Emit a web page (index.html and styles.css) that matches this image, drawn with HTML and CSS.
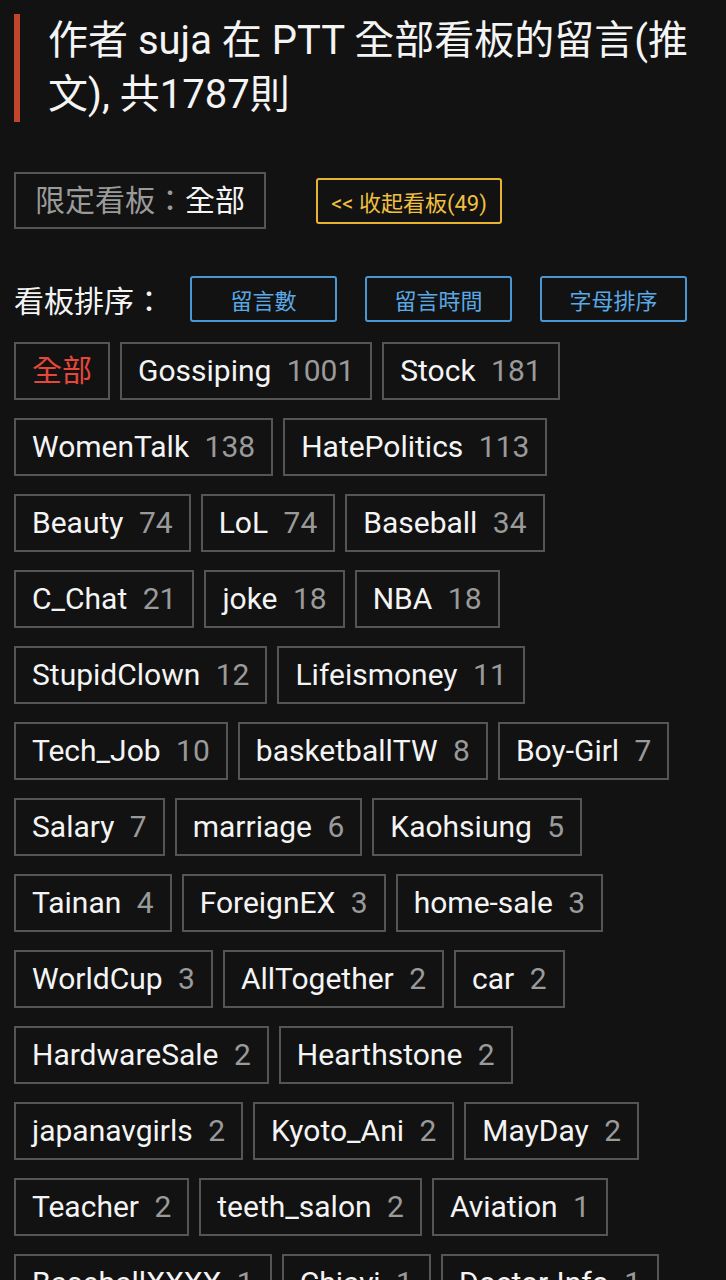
FILE: index.html
```html
<!DOCTYPE html>
<html lang="zh-Hant">
<head>
<meta charset="utf-8">
<link rel="stylesheet" href="styles.css">
</head>
<body>
<div class="page">
  <h1 class="title">作者 suja 在 PTT 全部看板的留言(推文), 共1787則</h1>

  <div class="filter-row">
    <div class="filter-box"><span class="muted">限定看板：</span>全部</div>
    <button class="btn btn-yellow">&lt;&lt; 收起看板(49)</button>
  </div>

  <div class="sort-row">
    <span class="sort-label">看板排序：</span>
    <button class="btn btn-blue">留言數</button>
    <button class="btn btn-blue">留言時間</button>
    <button class="btn btn-blue">字母排序</button>
  </div>

  <div class="tags">
    <span class="tag"><span class="all">全部</span></span>
    <span class="tag">Gossiping <span class="cnt">1001</span></span>
    <span class="tag">Stock <span class="cnt">181</span></span>
    <span class="tag">WomenTalk <span class="cnt">138</span></span>
    <span class="tag">HatePolitics <span class="cnt">113</span></span>
    <span class="tag">Beauty <span class="cnt">74</span></span>
    <span class="tag">LoL <span class="cnt">74</span></span>
    <span class="tag">Baseball <span class="cnt">34</span></span>
    <span class="tag">C_Chat <span class="cnt">21</span></span>
    <span class="tag">joke <span class="cnt">18</span></span>
    <span class="tag">NBA <span class="cnt">18</span></span>
    <span class="tag">StupidClown <span class="cnt">12</span></span>
    <span class="tag">Lifeismoney <span class="cnt">11</span></span>
    <span class="tag">Tech_Job <span class="cnt">10</span></span>
    <span class="tag">basketballTW <span class="cnt">8</span></span>
    <span class="tag">Boy-Girl <span class="cnt">7</span></span>
    <span class="tag">Salary <span class="cnt">7</span></span>
    <span class="tag">marriage <span class="cnt">6</span></span>
    <span class="tag">Kaohsiung <span class="cnt">5</span></span>
    <span class="tag">Tainan <span class="cnt">4</span></span>
    <span class="tag">ForeignEX <span class="cnt">3</span></span>
    <span class="tag">home-sale <span class="cnt">3</span></span>
    <span class="tag">WorldCup <span class="cnt">3</span></span>
    <span class="tag">AllTogether <span class="cnt">2</span></span>
    <span class="tag">car <span class="cnt">2</span></span>
    <span class="tag">HardwareSale <span class="cnt">2</span></span>
    <span class="tag">Hearthstone <span class="cnt">2</span></span>
    <span class="tag">japanavgirls <span class="cnt">2</span></span>
    <span class="tag">Kyoto_Ani <span class="cnt">2</span></span>
    <span class="tag">MayDay <span class="cnt">2</span></span>
    <span class="tag">Teacher <span class="cnt">2</span></span>
    <span class="tag">teeth_salon <span class="cnt">2</span></span>
    <span class="tag">Aviation <span class="cnt">1</span></span>
    <span class="tag">BaseballXXXX <span class="cnt">1</span></span>
    <span class="tag">Chiayi <span class="cnt">1</span></span>
    <span class="tag">Doctor-Info <span class="cnt">1</span></span>
  </div>
</div>
</body>
</html>
```
FILE: styles.css
```css
html, body {
  margin: 0;
  padding: 0;
  background: #121212;
}
body {
  font-family: Roboto, "Noto Sans CJK TC", sans-serif;
  color: #f2f2f2;
}
.page {
  padding: 14px 14px 0 14px;
}
.title {
  margin: 0;
  border-left: 6px solid #c0452a;
  padding-left: 28px;
  font-size: 40px;
  font-weight: 400;
  line-height: 54px;
  color: #f4f4f4;
}
.filter-row {
  display: flex;
  align-items: center;
  margin-top: 50px;
}
.filter-box {
  box-sizing: border-box;
  height: 57px;
  padding: 0 19px;
  border: 2px solid #555;
  font-size: 30px;
  line-height: 53px;
  color: #f4f4f4;
}
.muted {
  color: #9a9a9a;
}
.btn {
  box-sizing: border-box;
  height: 46px;
  background: transparent;
  border-radius: 3px;
  font-family: Roboto, "Noto Sans CJK TC", sans-serif;
  font-size: 22px;
  padding: 0;
  cursor: pointer;
}
.btn-yellow {
  margin-left: 50px;
  width: 186px;
  border: 2px solid #e8b430;
  color: #f0c040;
}
.sort-row {
  display: flex;
  align-items: center;
  margin-top: 47px;
}
.sort-label {
  font-size: 30px;
  width: 176px;
  flex: none;
  color: #f4f4f4;
}
.btn-blue {
  width: 147px;
  flex: none;
  margin-right: 28px;
  border: 2px solid #4a97d4;
  color: #5aa8e4;
}
.tags {
  display: flex;
  flex-wrap: wrap;
  gap: 18px 10px;
  margin-top: 20px;
}
.tag {
  box-sizing: border-box;
  height: 58px;
  padding: 0 16px;
  border: 2px solid #555;
  font-size: 30px;
  line-height: 54px;
  color: #f4f4f4;
  white-space: nowrap;
}
.cnt {
  color: #9a9a9a;
  margin-left: 8px;
}
.all {
  color: #e6473a;
}
```
